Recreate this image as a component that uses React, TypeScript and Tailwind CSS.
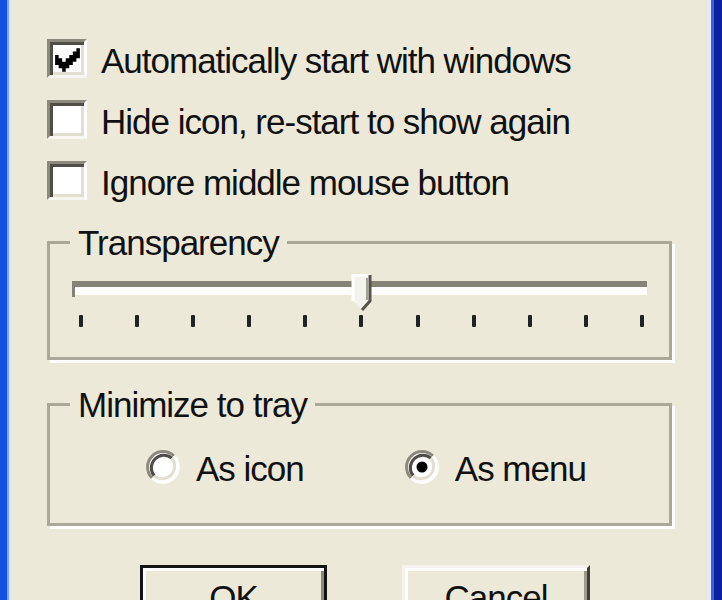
import type { ReactNode } from 'react';

const font = { fontFamily: '"Liberation Sans", Arial, sans-serif' };

const options = [
  { label: 'Automatically start with windows', checked: true },
  { label: 'Hide icon, re-start to show again', checked: false },
  { label: 'Ignore middle mouse button', checked: false },
];

function CheckBox({ checked }: { checked: boolean }) {
  return (
    <span className="block h-[39px] w-[40px] shrink-0 border-[3px] border-t-[#8c8a7c] border-l-[#8c8a7c] border-r-white border-b-[#f7f6f0] bg-white shadow-[inset_3px_3px_0_#4f4d45,inset_-3px_-3px_0_#e2dfd1]">
      {checked ? (
        <svg viewBox="1.56 1.13 9.6 9.86" preserveAspectRatio="none" className="h-full w-full">
          <path
            d="M3 5h1v3H3z M4 6h1v3H4z M5 7h1v3H5z M6 6h1v3H6z M7 5h1v3H7z M8 4h1v3H8z M9 3h1v3H9z"
            fill="#000"
          />
        </svg>
      ) : null}
    </span>
  );
}

function Radio({ checked }: { checked: boolean }) {
  return (
    <svg width="36" height="36" viewBox="0 0 36 36" className="shrink-0">
      <circle cx="18" cy="18" r="16" fill="#fff" />
      <path d="M7.04 28.96 A15.5 15.5 0 0 1 28.96 7.04" fill="none" stroke="#8c8a7c" strokeWidth="3" />
      <path d="M9.2 26.8 A12.5 12.5 0 0 1 26.8 9.2" fill="none" stroke="#4f4d45" strokeWidth="3" />
      <path d="M28.96 7.04 A15.5 15.5 0 0 1 7.04 28.96" fill="none" stroke="#fdfdfb" strokeWidth="3" />
      <path d="M26.8 9.2 A12.5 12.5 0 0 1 9.2 26.8" fill="none" stroke="#e2dfd1" strokeWidth="3" />
      {checked ? <circle cx="18" cy="18" r="5.5" fill="#000" /> : null}
    </svg>
  );
}

function GroupBox({ title, children, className }: { title: string; children: ReactNode; className?: string }) {
  return (
    <fieldset className={`border-[3px] border-[#aaa898] shadow-[3px_3px_0_#fdfdfb] ${className ?? ''}`}>
      <legend className="ml-[20px] px-[8px] text-[35px] leading-none tracking-[-1px] text-[#111]">{title}</legend>
      {children}
    </fieldset>
  );
}

export default function App() {
  const ticks = Array.from({ length: 11 }, (_, i) => i);

  return (
    <div className="flex h-[600px] w-[722px] overflow-hidden bg-[#ece9d8]" style={font}>
      <div className="w-[7px] bg-[#1552e3]" />
      <div className="w-[2px] bg-[#7fa3ee]" />
      <div className="w-[2px] bg-[#dde5f4]" />

      <main className="flex min-w-0 flex-1 flex-col">
        <div className="h-[3px] bg-[#d9e2ea]" />

        <div className="flex flex-col px-[36px] pt-[28px]">
          {options.map((option) => (
            <label key={option.label} className="flex h-[61px] items-center gap-[14px]">
              <CheckBox checked={option.checked} />
              <span className="mt-[4px] text-[35px] leading-none tracking-[-1px] whitespace-nowrap text-[#111]">
                {option.label}
              </span>
            </label>
          ))}

          <GroupBox title="Transparency" className="mt-[14px]">
            <div className="px-[22px] pt-[21px] pb-[30px]">
              <div className="relative">
                <div className="h-[16px] border-t-[6px] border-l-[3px] border-t-[#858375] border-l-[#858375] bg-[#fdfdfb] shadow-[inset_0_-2px_0_#ece9d8]" />
                <svg width="22" height="38" viewBox="0 0 22 38" className="absolute top-[-7px] left-[279px]">
                  <path d="M2 1 H19 V27 L11 36 L2 27 Z" fill="#f3f2ec" />
                  <path d="M2 27 V1 H19" fill="none" stroke="#fff" strokeWidth="3" />
                  <path d="M19 1 V27 L11 36" fill="none" stroke="#55534a" strokeWidth="3" />
                  <path d="M16 4 V26" fill="none" stroke="#a3a192" strokeWidth="2" />
                </svg>
                <div className="mt-[18px] flex justify-between pr-[3px] pl-[7px]">
                  {ticks.map((t) => (
                    <span key={t} className="block h-[12px] w-[4px] rounded-[1px] bg-[#222]" />
                  ))}
                </div>
              </div>
            </div>
          </GroupBox>

          <GroupBox title="Minimize to tray" className="mt-[27px]">
            <div className="flex items-center gap-[100px] pt-[25px] pb-[37px] pl-[95px]">
              <label className="flex items-center gap-[15px]">
                <Radio checked={false} />
                <span className="mt-[4px] text-[35px] leading-none tracking-[-1px] text-[#111]">As icon</span>
              </label>
              <label className="flex items-center gap-[15px]">
                <Radio checked />
                <span className="mt-[4px] text-[35px] leading-none tracking-[-1px] text-[#111]">As menu</span>
              </label>
            </div>
          </GroupBox>

          <div className="mt-[39px] flex gap-[75px] pl-[93px]">
            <button
              type="button"
              className="h-[64px] w-[187px] shrink-0 border-[3px] border-[#141414] bg-[#ece9d8] text-[35px] leading-none tracking-[-1px] text-[#111] shadow-[inset_3px_3px_0_#fdfdfb,inset_-3px_-3px_0_#8c8a7c]"
            >
              OK
            </button>
            <button
              type="button"
              className="h-[64px] w-[188px] shrink-0 border-[3px] border-t-[#f4f3ee] border-l-[#f4f3ee] border-r-[#3e3d37] border-b-[#3e3d37] bg-[#ece9d8] text-[35px] leading-none tracking-[-1px] text-[#111] shadow-[inset_3px_3px_0_#fdfdfb,inset_-3px_-3px_0_#9d9b8c]"
            >
              Cancel
            </button>
          </div>
        </div>
      </main>

      <div className="w-[3px] bg-[#e7e9f6]" />
      <div className="w-[3px] bg-[#3f5fe4]" />
      <div className="w-[8px] bg-[#0c20a0]" />
    </div>
  );
}
